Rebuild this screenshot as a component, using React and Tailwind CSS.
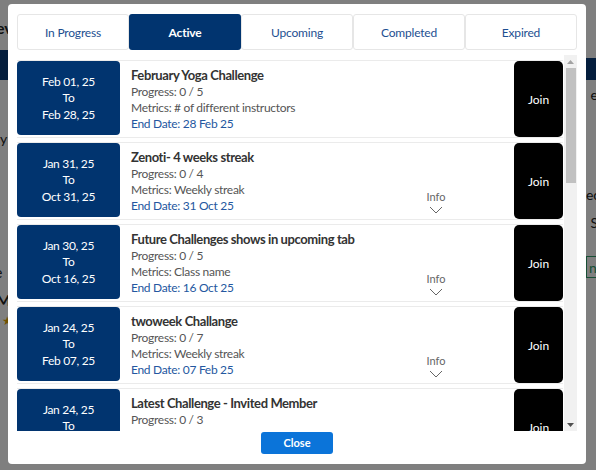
import React from 'react';

const challenges = [
    { from: 'Feb 01, 25', to: 'Feb 28, 25', title: 'February Yoga Challenge', progress: '0 / 5', metrics: '# of different instructors', end: '28 Feb 25', info: false },
    { from: 'Jan 31, 25', to: 'Oct 31, 25', title: 'Zenoti- 4 weeks streak', progress: '0 / 4', metrics: 'Weekly streak', end: '31 Oct 25', info: true },
    { from: 'Jan 30, 25', to: 'Oct 16, 25', title: 'Future Challenges shows in upcoming tab', progress: '0 / 5', metrics: 'Class name', end: '16 Oct 25', info: true },
    { from: 'Jan 24, 25', to: 'Feb 07, 25', title: 'twoweek Challange', progress: '0 / 7', metrics: 'Weekly streak', end: '07 Feb 25', info: true },
    { from: 'Jan 24, 25', to: 'Feb 14, 25', title: 'Latest Challenge - Invited Member', progress: '0 / 3', metrics: 'Weekly streak', end: '14 Feb 25', info: true },
];

const tabs = ['In Progress', 'Active', 'Upcoming', 'Completed', 'Expired'];

const ChallengeCard = ({ item }) => (
    <div className="flex h-[78px] shrink-0 border-y border-[#ebebeb] bg-white mb-[4px]">
        <div className="w-[103px] h-[74px] shrink-0 rounded-[4px] bg-[#01346f] flex flex-col items-center justify-center pt-[1px] text-white text-[12px] tracking-[-0.3px] leading-[16.5px]">
            <span>{item.from}</span>
            <span>To</span>
            <span>{item.to}</span>
        </div>
        <div className="flex-1 pl-[11px] pt-[5px] min-w-0">
            <div className="text-[13px] leading-[18px] font-bold tracking-[-0.4px] text-[#333] whitespace-nowrap">{item.title}</div>
            <div className="text-[12px] leading-[16px] tracking-[-0.3px] text-[#555]">Progress: {item.progress}</div>
            <div className="text-[12px] leading-[16px] tracking-[-0.3px] text-[#555]">Metrics: {item.metrics}</div>
            <div className="text-[12px] leading-[16px] tracking-[-0.3px] text-[#2457a0]">End Date: {item.end}</div>
        </div>
        <div className="w-[156px] shrink-0 flex flex-col items-center justify-end pb-[5px]">
            {item.info && (
                <>
                    <span className="text-[11px] leading-[13px] text-[#666]">Info</span>
                    <svg width="14" height="8" viewBox="0 0 14 8" className="mt-[3px]">
                        <polyline points="1,1 7,7 13,1" fill="none" stroke="#666" strokeWidth="1" />
                    </svg>
                </>
            )}
        </div>
        <div className="w-[49px] h-[76px] shrink-0 rounded-[5px] bg-black flex items-center justify-center pt-[1px] text-white text-[12px]">
            Join
        </div>
    </div>
);

const App = () => {
    return (
        <div className="relative w-[596px] h-[470px] overflow-hidden bg-white font-[Lato,sans-serif]">
            {/* page behind the dialog */}
            <div className="flex flex-col text-[#222]">
                <div className="h-[16px]" />
                <div className="flex justify-between h-[24px] text-[16px] font-bold">
                    <span className="-ml-[4px]">ev</span>
                    <span />
                </div>
                <div className="flex justify-between h-[28px]">
                    <div className="w-[8px] h-[30px] mt-[10px] bg-[#0b3c7a]" />
                    <div className="w-[10px] h-[22px] mt-[18px] bg-[#0b3c7a]" />
                </div>
                <div className="flex justify-between h-[60px] text-[14px]">
                    <span />
                    <span className="mr-[-2px] mt-[16px]">e</span>
                </div>
                <div className="flex justify-between h-[60px] text-[14px]">
                    <span>y</span>
                    <span className="mr-[-4px] mt-[56px]">ec</span>
                </div>
                <div className="flex justify-between h-[60px] text-[14px]">
                    <span />
                    <span className="mr-[-2px] mt-[24px]">S</span>
                </div>
                <div className="flex justify-between h-[40px] text-[16px]">
                    <span className="-ml-[6px] mt-[12px]">e</span>
                    <div className="w-[10px] h-[22px] mt-[8px] border-y border-l border-[#2e9e6b] text-[#2e9e6b] text-[14px] pl-[2px]">n</div>
                </div>
                <div className="flex justify-between h-[24px] text-[16px] font-bold">
                    <span className="-ml-[4px]">M</span>
                    <span />
                </div>
                <div className="flex h-[20px] text-[12px] text-[#e0a000]">
                    <span className="ml-[2px]">★</span>
                </div>
            </div>

            {/* overlay */}
            <div className="absolute inset-0 bg-black/50" />

            {/* dialog */}
            <div className="absolute left-[8px] top-[4px] w-[578px] h-[460px] rounded-[4px] bg-white pt-[10px] px-[9px] flex flex-col">
                <div className="flex h-[36px]">
                    {tabs.map((tab) => {
                        const isActive = tab === 'Active';
                        return (
                            <div
                                key={tab}
                                className={`w-[112px] h-[36px] flex items-center justify-center pt-[1px] rounded-[3px] text-[12px] tracking-[-0.2px] ${isActive
                                    ? 'bg-[#01346f] text-white font-bold'
                                    : 'border border-[#e6e6e6] text-[#1d4f91]'
                                    }`}
                            >
                                {tab}
                            </div>
                        );
                    })}
                </div>

                <div className="flex mt-[5px] h-[376px] gap-[1px]">
                    <div className="w-[546px] h-[376px] overflow-hidden pt-[5px] flex flex-col">
                        {challenges.map((item, i) => (
                            <ChallengeCard key={i} item={item} />
                        ))}
                    </div>
                    <div className="w-[13px] h-[376px] bg-[#f1f1f1] flex flex-col items-center">
                        <div className="h-[13px] flex items-center justify-center">
                            <svg width="7" height="4" viewBox="0 0 7 4"><polygon points="0,4 3.5,0 7,4" fill="#a3a3a3" /></svg>
                        </div>
                        <div className="w-[10px] h-[115px] bg-[#c1c1c1]" />
                        <div className="flex-1" />
                        <div className="h-[13px] flex items-center justify-center">
                            <svg width="7" height="4" viewBox="0 0 7 4"><polygon points="0,0 3.5,4 7,0" fill="#505050" /></svg>
                        </div>
                    </div>
                </div>

                <div className="flex justify-center mt-[1px]">
                    <button className="w-[72px] h-[22px] rounded-[3px] bg-[#0b74d9] text-white text-[11px] font-bold">
                        Close
                    </button>
                </div>
            </div>
        </div>
    );
};

export default App;
